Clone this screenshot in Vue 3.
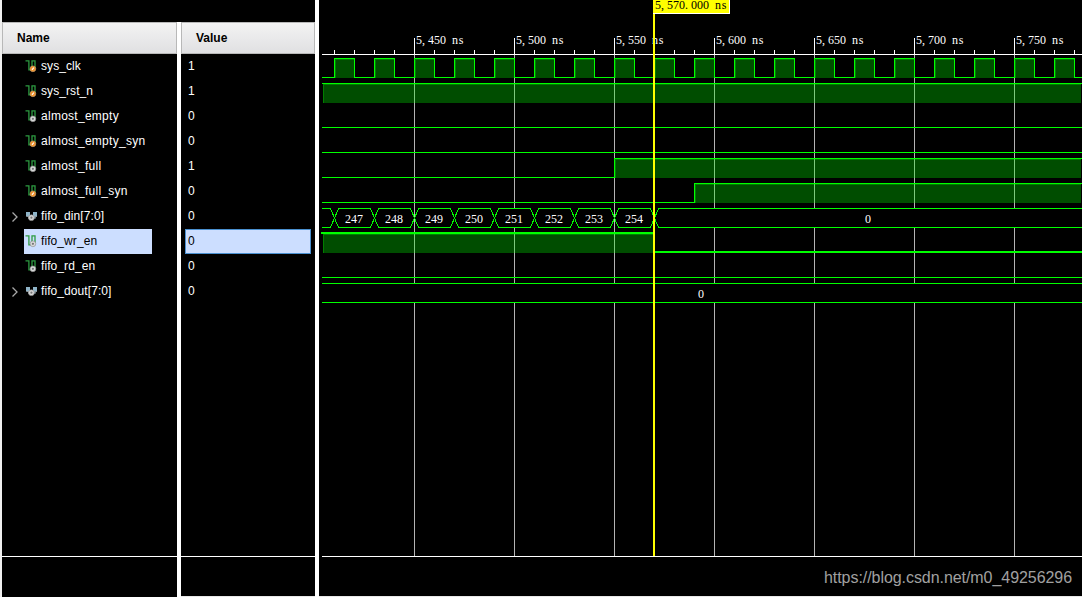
<template>
  <div class="viewer">
    <div class="panels">
      <div class="panel names">
        <div class="panel-header">Name</div>
        <div
          v-for="signal in signals"
          :key="signal.name"
          :class="['name-row', { selected: signal.selected }]"
        >
          <svg class="arrow" width="8" height="12" viewBox="0 0 8 12">
            <path v-if="signal.type === 'bus'" d="M1.5 1.5L6 6L1.5 10.5" />
          </svg>
          <div class="name-cell">
            <svg v-if="signal.type === 'bus'" width="13" height="13" viewBox="0 0 13 13">
              <path class="bus-shape" d="M0 2H4V5.5H7V2H11V6.5H9.5V8.5H2V6.5H0Z" />
              <path class="bus-mark" d="M0.5 6.5H2.5V8.5M11 6.5H9V8.5" />
              <circle class="badge-out" cx="5.4" cy="7.7" r="2.9" />
              <circle class="badge-hole" cx="5.4" cy="7.7" r="1.1" />
            </svg>
            <svg v-else width="13" height="13" viewBox="0 0 13 13">
              <path class="wave-shape" d="M-0.5 0.9H2.9V9.9H6V0.9H9V8" />
              <circle :class="signal.input ? 'badge-in' : 'badge-out'" cx="6.9" cy="8.8" r="2.9" />
              <path v-if="signal.input" class="badge-mark" d="M6 9.9L7.8 7.7" />
              <circle v-else class="badge-hole" cx="6.9" cy="8.8" r="1.1" />
            </svg>
            <span :class="{ roomy: signal.name.startsWith('almost') }">{{ signal.name }}</span>
          </div>
        </div>
        <div class="bottom-line"></div>
      </div>

      <div class="panel values">
        <div class="panel-header">Value</div>
        <div
          v-for="signal in signals"
          :key="signal.name"
          :class="['value-row', { selected: signal.selected }]"
        >
          {{ signal.value }}
        </div>
        <div class="bottom-line"></div>
      </div>
    </div>

    <div class="wave">
      <svg class="wave-canvas" width="763" height="596" viewBox="0 0 763 596">
        <!-- grid -->
        <g class="crisp">
          <rect v-for="t in majorTicks" :key="t" class="grid" :x="timeX(t)" y="55" width="1" height="501" />
        </g>

        <!-- signals -->
        <g v-for="(signal, row) in signals" :key="signal.name" class="crisp">
          <template v-if="signal.type === 'bus'">
            <path
              v-for="(seg, i) in signal.segments"
              :key="i"
              class="bus"
              :d="busPath(seg, row)"
            />
          </template>
          <template v-else>
            <template v-for="(seg, i) in signal.segments" :key="i">
              <template v-if="seg.level">
                <rect class="fill" :x="fillX(seg)" :y="rowTop(row) + 1" :width="fillEnd(seg) - fillX(seg)" height="19" />
                <rect class="shade" :x="fillX(seg)" :y="rowTop(row) + 1" :width="fillEnd(seg) - fillX(seg)" height="1" />
                <rect class="shade" :x="fillX(seg)" :y="rowTop(row) + 2" width="1" height="18" />
              </template>
            </template>
            <path :class="['line', { thick: signal.selected }]" :d="linePath(signal, row)" />
          </template>
        </g>

        <!-- bus values -->
        <g v-for="(signal, row) in signals" :key="signal.name">
          <template v-if="signal.type === 'bus'">
            <template v-for="(seg, i) in signal.segments" :key="i">
              <text
                v-if="seg.label"
                class="mono"
                :x="charX(seg.label, labelX(seg))"
                :y="rowTop(row) + 15"
              >{{ seg.label }}</text>
            </template>
          </template>
        </g>

        <!-- time ruler -->
        <g class="crisp ruler">
          <rect x="3" y="54" width="760" height="1" />
          <rect x="3" y="556" width="760" height="1" />
          <rect v-for="t in minorTicks" :key="t" :x="timeX(t)" y="50" width="1" height="4" />
          <rect v-for="t in majorTicks" :key="t" :x="timeX(t)" y="38" width="1" height="16" />
        </g>
        <text
          v-for="t in majorTicks"
          :key="t"
          class="mono"
          :x="charX(formatTime(t), timeX(t) + 2)"
          y="44"
        >{{ formatTime(t) }}</text>

        <!-- cursor -->
        <g class="crisp">
          <rect class="cursor" :x="timeX(cursorTime) - 1" y="0" width="2" height="556" />
          <rect class="cursor-edge" :x="timeX(cursorTime) - 1" y="0" width="77" height="14" />
          <rect class="cursor" :x="timeX(cursorTime) - 1" y="0" width="76" height="13" />
        </g>
        <text class="mono cursor-text" :x="charX(cursorLabel, timeX(cursorTime) + 1)" y="9">{{ cursorLabel }}</text>
      </svg>
      <div class="watermark">https://blog.csdn.net/m0_49256296</div>
    </div>
  </div>
</template>

<script setup>
const START = 5404
const END = 5784
const PX_PER_NS = 2

const cursorTime = 5570
const cursorLabel = '5,570.000 ns'

const range = (from, to, step) => {
  const list = []
  for (let t = from; t <= to; t += step) {
    list.push(t)
  }
  return list
}

const majorTicks = range(5450, 5750, 50)
const minorTicks = range(5410, 5780, 10)

// 20 ns clock, high for the first half of the period
const clock = [{ from: START, to: 5410, level: 0 }]
for (let t = 5410; t < END; t += 10) {
  clock.push({ from: t, to: Math.min(t + 10, END), level: (t / 10) % 2 })
}

const din = [{ from: START, to: 5410 }]
for (let n = 247; n <= 254; n++) {
  const from = 5410 + (n - 247) * 20
  din.push({ from, to: from + 20, label: String(n) })
}
din.push({ from: 5570, to: END, label: '0' })

const flat = level => [{ from: START, to: END, level }]
const step = (at, first) => [
  { from: START, to: at, level: first },
  { from: at, to: END, level: 1 - first }
]

const signals = [
  { name: 'sys_clk', value: '1', input: true, segments: clock },
  { name: 'sys_rst_n', value: '1', input: true, segments: flat(1) },
  { name: 'almost_empty', value: '0', segments: flat(0) },
  { name: 'almost_empty_syn', value: '0', input: true, segments: flat(0) },
  { name: 'almost_full', value: '1', segments: step(5550, 0) },
  { name: 'almost_full_syn', value: '0', input: true, segments: step(5590, 0) },
  { name: 'fifo_din[7:0]', value: '0', type: 'bus', segments: din },
  { name: 'fifo_wr_en', value: '0', selected: true, segments: step(5570, 1) },
  { name: 'fifo_rd_en', value: '0', segments: flat(0) },
  { name: 'fifo_dout[7:0]', value: '0', type: 'bus', segments: [{ from: START, to: END, label: '0' }] }
]

const timeX = t => 3 + (t - START) * PX_PER_NS
const rowTop = row => 58 + row * 25

const fillX = seg => timeX(seg.from) + 1
const fillEnd = seg => (seg.to === END ? timeX(seg.to) - 1 : timeX(seg.to))

const linePath = (signal, row) => {
  // the selected signal is drawn two pixels wide
  const high = rowTop(row) + (signal.selected ? 0 : 0.5)
  const low = rowTop(row) + (signal.selected ? 19 : 19.5)
  const half = signal.selected ? 0 : 0.5
  return signal.segments
    .map((seg, i) => {
      const y = seg.level ? high : low
      const x1 = i === 0 ? timeX(seg.from) - (signal.selected ? 1 : 0) : timeX(seg.from) + half
      return `${i === 0 ? 'M' : 'L'}${x1} ${y}H${timeX(seg.to) + half}`
    })
    .join('')
}

const busPath = (seg, row) => {
  const top = rowTop(row) + 0.5
  const bottom = top + 19
  const mid = (top + bottom) / 2
  const x1 = timeX(seg.from) + 0.5
  const x2 = timeX(seg.to) + 0.5
  const left = seg.from === START ? `M${x1 - 0.5} ` : null
  if (left && seg.to === END) {
    return `${left}${top}H${x2}V${bottom}H${x1 - 0.5}`
  }
  if (left) {
    return `${left}${top}H${x2 - 4}L${x2} ${mid}L${x2 - 4} ${bottom}H${x1 - 0.5}`
  }
  if (seg.to === END) {
    return `M${x2} ${top}H${x1 + 4}L${x1} ${mid}L${x1 + 4} ${bottom}H${x2}`
  }
  return `M${x1} ${mid}L${x1 + 4} ${top}H${x2 - 4}L${x2} ${mid}L${x2 - 4} ${bottom}H${x1 + 4}Z`
}

const labelX = seg => {
  const from = timeX(seg.from) - (seg.from === START ? 1 : 0)
  return Math.floor((from + timeX(seg.to)) / 2) - seg.label.length * 3
}

// fixed 6px character cells, the narrow "s" sits in the middle of its cell
const charX = (text, x) =>
  text
    .split('')
    .map((c, i) => x + i * 6 + (c === 's' ? 0.7 : 0))
    .join(' ')

const formatTime = t => `${Math.floor(t / 1000)},${String(t % 1000).padStart(3, '0')} ns`
</script>

<style>
body {
  margin: 0;
  background: #f0f0f0;
}
</style>

<style scoped>
.viewer {
  display: flex;
  width: 1082px;
  height: 597px;
  overflow: hidden;
  font-family: "Liberation Sans", Arial, sans-serif;
  font-size: 12px;
  color: #fff;
}

.panels {
  display: flex;
  gap: 4px;
  box-sizing: border-box;
  width: 319px;
  padding-left: 2px;
  border-right: 4px solid #fff;
  background: linear-gradient(#000 22px, #fff 22px) 2px 0 no-repeat;
}

.panel {
  display: flex;
  flex-direction: column;
  box-sizing: border-box;
  height: 597px;
  padding-top: 22px;
  background: #000;
}

.names {
  width: 175px;
}

.values {
  width: 134px;
  border-bottom: 1px solid #e8e8e8;
}

.panel-header {
  box-sizing: border-box;
  height: 32px;
  padding-left: 14px;
  border: 1px solid #b8b8b8;
  background: linear-gradient(#f3f3f3, #e0e0e2);
  color: #000;
  font-weight: bold;
  line-height: 30px;
}

.name-row {
  display: flex;
  align-items: center;
  height: 25px;
  padding-left: 9px;
}

.name-cell {
  display: flex;
  align-items: center;
  box-sizing: border-box;
  width: 128px;
  height: 25px;
  margin-left: 5px;
  padding-left: 2px;
  line-height: 25px;
  white-space: nowrap;
}

.name-cell svg {
  overflow: visible;
}

.name-cell span {
  margin-left: 2px;
  letter-spacing: 0.08px;
}

.name-cell .roomy {
  letter-spacing: 0.27px;
}

.name-row.selected .name-cell {
  background: #ccdeff;
  color: #000;
}

.value-row {
  box-sizing: border-box;
  height: 25px;
  margin: 0 4px;
  padding-left: 2px;
  border: 1px solid transparent;
  line-height: 23px;
}

.value-row.selected {
  border-color: #4a90d0;
  background: #ccdeff;
  color: #000;
}

.bottom-line {
  height: 1px;
  margin-top: 252px;
  background: #fff;
}

.arrow path {
  fill: none;
  stroke: #a8a8a8;
  stroke-width: 1.3;
}

.wave-shape {
  fill: none;
  stroke: #2d9a41;
  stroke-width: 1.3;
}

.bus-shape {
  fill: #8fb4c8;
}

.bus-mark {
  fill: none;
  stroke: #8c9499;
}

.badge-in {
  fill: #f0932b;
  stroke: #c9a070;
  stroke-width: 0.6;
}

.badge-mark {
  stroke: #fff;
  stroke-width: 1.2;
}

.badge-out {
  fill: #d8d8d8;
  stroke: #8a8a8a;
  stroke-width: 0.6;
}

.badge-hole {
  fill: #777;
}

.wave {
  position: relative;
  box-sizing: border-box;
  width: 763px;
  height: 597px;
  border-bottom: 1px solid #e8e8e8;
  background: #000;
}

.wave-canvas {
  display: block;
}

.crisp {
  shape-rendering: crispEdges;
}

.grid {
  fill: #b4b4b4;
}

.ruler {
  fill: #fff;
}

.fill {
  fill: rgba(0, 255, 0, 0.3);
}

.shade {
  fill: rgba(0, 255, 0, 0.28);
}

.line {
  fill: none;
  stroke: #00ff00;
  stroke-width: 1;
}

.line.thick {
  stroke-width: 2;
}

.bus {
  fill: #000;
  stroke: #00ff00;
  stroke-width: 1;
}

.mono {
  fill: #fff;
  font-family: "Liberation Serif", serif;
  font-size: 12px;
}

.cursor {
  fill: #ffff00;
}

.cursor-edge {
  fill: #fff;
}

.cursor-text {
  fill: #000;
}

.watermark {
  position: absolute;
  right: 10px;
  bottom: 9px;
  color: #a0a0a0;
  font-size: 16px;
  letter-spacing: -0.06px;
  line-height: 18px;
}
</style>
